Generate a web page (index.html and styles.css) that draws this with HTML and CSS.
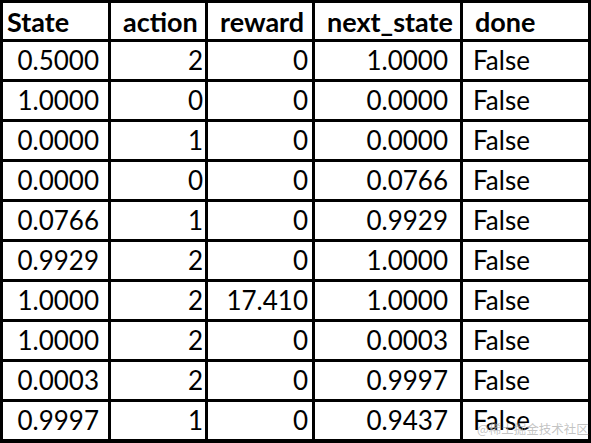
FILE: index.html
```html
<!DOCTYPE html>
<html>
<head>
<meta charset="utf-8">
<link rel="stylesheet" href="styles.css">
</head>
<body>
<div class="sheet">
  <div class="grid">
    <div class="h c1">State</div><div class="h c2">action</div><div class="h c3">reward</div><div class="h c4">next_state</div><div class="h c5">done</div>

    <div class="n c1">0.5000</div><div class="n c2">2</div><div class="n c3">0</div><div class="n c4">1.0000</div><div class="t c5">False</div>
    <div class="n c1">1.0000</div><div class="n c2">0</div><div class="n c3">0</div><div class="n c4">0.0000</div><div class="t c5">False</div>
    <div class="n c1">0.0000</div><div class="n c2">1</div><div class="n c3">0</div><div class="n c4">0.0000</div><div class="t c5">False</div>
    <div class="n c1">0.0000</div><div class="n c2">0</div><div class="n c3">0</div><div class="n c4">0.0766</div><div class="t c5">False</div>
    <div class="n c1">0.0766</div><div class="n c2">1</div><div class="n c3">0</div><div class="n c4">0.9929</div><div class="t c5">False</div>
    <div class="n c1">0.9929</div><div class="n c2">2</div><div class="n c3">0</div><div class="n c4">1.0000</div><div class="t c5">False</div>
    <div class="n c1">1.0000</div><div class="n c2">2</div><div class="n c3">17.410</div><div class="n c4">1.0000</div><div class="t c5">False</div>
    <div class="n c1">1.0000</div><div class="n c2">2</div><div class="n c3">0</div><div class="n c4">0.0003</div><div class="t c5">False</div>
    <div class="n c1">0.0003</div><div class="n c2">2</div><div class="n c3">0</div><div class="n c4">0.9997</div><div class="t c5">False</div>
    <div class="n c1">0.9997</div><div class="n c2">1</div><div class="n c3">0</div><div class="n c4">0.9437</div><div class="t c5">False</div>
  </div>
  <div class="watermark">@稀土掘金技术社区</div>
</div>
</body>
</html>
```

FILE: styles.css
```css
html, body {
  margin: 0;
  padding: 0;
  background: #ffffff;
}

.sheet {
  position: relative;
  width: 591px;
  height: 443px;
  overflow: hidden;
}

.grid {
  display: grid;
  grid-template-columns: 105px 94px 104px 145px 125px;
  grid-template-rows: 36px repeat(10, 37px);
  gap: 3px;
  padding: 3px 3px 4px 3px;
  background: #000000;
  font-family: Lato, "Noto Sans", sans-serif;
  font-size: 26px;
  color: #000000;
}

.grid > div {
  background: #ffffff;
  display: flex;
  align-items: flex-end;
  white-space: nowrap;
  line-height: 1;
}

.h {
  font-weight: 700;
  font-size: 27px;
  padding-bottom: 4px;
  justify-content: flex-start;
  padding-left: 12px;
}

.h.c1 {
  padding-left: 4px;
}

.n {
  justify-content: flex-end;
  padding-bottom: 6px;
}

.t {
  justify-content: flex-start;
  padding-bottom: 6px;
  padding-left: 10px;
}

.n.c1 { padding-right: 9px; }
.n.c2 { padding-right: 2px; }
.n.c3 { padding-right: 4px; }
.n.c4 { padding-right: 12px; }

.watermark {
  position: absolute;
  left: 477px;
  top: 423px;
  font-family: "Noto Sans CJK SC", sans-serif;
  font-size: 12.5px;
  line-height: 1;
  color: rgba(170, 170, 170, 0.7);
  white-space: nowrap;
}
```
